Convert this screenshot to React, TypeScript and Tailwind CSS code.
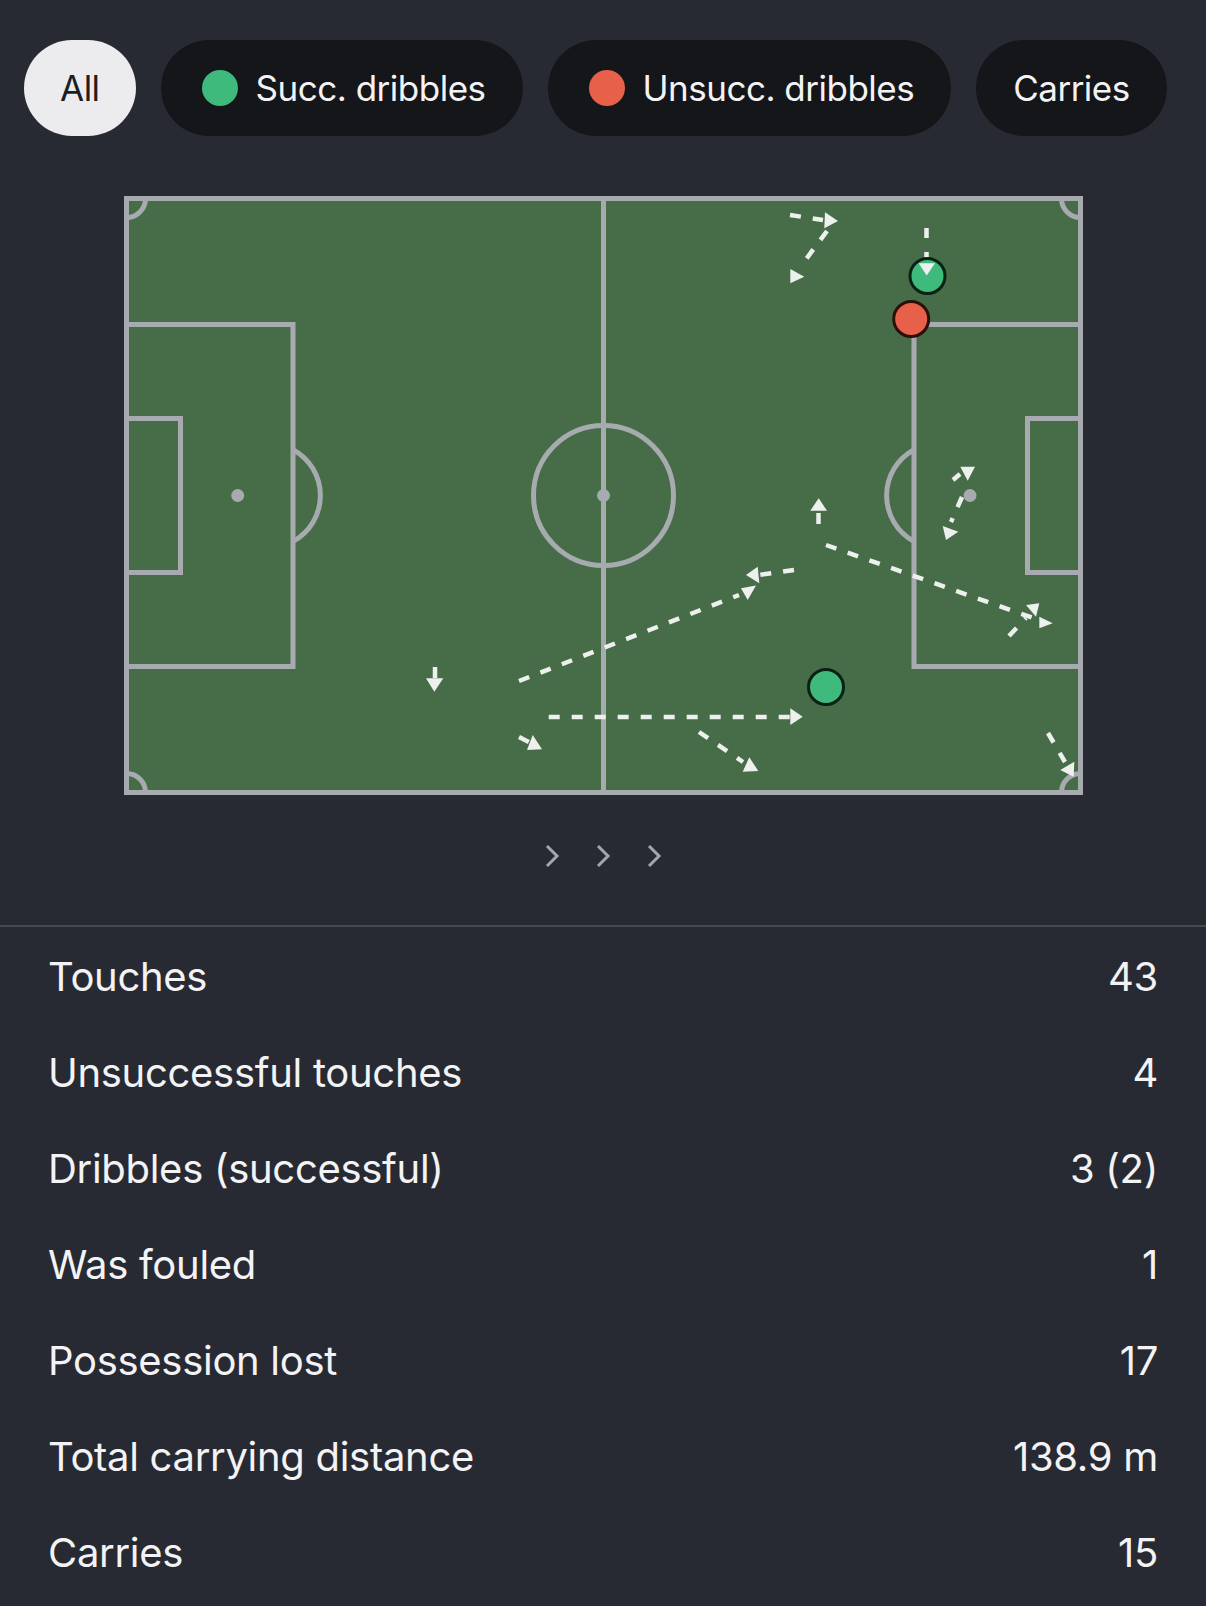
import React from "react";

type Carry = { x1: number; y1: number; x2: number; y2: number; head: string };

const filters = [
  { label: "All", active: true },
  { label: "Succ. dribbles", dot: "bg-[#3dba7c]" },
  { label: "Unsucc. dribbles", dot: "bg-[#e6604a]" },
  { label: "Carries" },
];

// carries in page pixel coords (the svg viewBox matches the page)
const carries: Carry[] = [
  { x1: 789, y1: 215, x2: 822, y2: 220, head: "824,212.3 837,221 823.3,228.3" },
  { x1: 826, y1: 231, x2: 800, y2: 266, head: "789.3,269 803.3,276.7 789.3,283.3" },
  { x1: 952, y1: 480, x2: 959, y2: 474, head: "959.3,466.7 974,466.7 966.7,480.7" },
  { x1: 961, y1: 497, x2: 950, y2: 522, head: "941.7,526 957.3,531.7 945,540" },
  { x1: 817.5, y1: 524, x2: 817.5, y2: 512, head: "809.3,510.7 826,510.7 817.7,498.3" },
  { x1: 825, y1: 545, x2: 1035, y2: 619, head: "1038.3,616.7 1051.7,623.3 1038.3,628.3" },
  { x1: 793, y1: 570, x2: 758, y2: 575, head: "745,575 756.7,566.7 758.3,583.3" },
  { x1: 518, y1: 681, x2: 738, y2: 595, head: "740,588.3 755,585.5 746.7,600" },
  { x1: 547.7, y1: 717, x2: 789, y2: 717, head: "789.3,708.3 801.7,716.7 789.3,725" },
  { x1: 434, y1: 667, x2: 434, y2: 678, head: "425,678.3 442.3,678.3 433.3,691.7" },
  { x1: 518, y1: 737, x2: 528, y2: 742, head: "531.7,735 526,750 541,749.3" },
  { x1: 698, y1: 732, x2: 742, y2: 762, head: "748.3,757.3 741.7,771.7 757.3,771" },
  { x1: 1047, y1: 733, x2: 1064, y2: 762, head: "1059.3,770 1073.3,761.7 1072.7,776.7" },
  { x1: 1008, y1: 636, x2: 1025, y2: 618, head: "1025,605 1038.3,603.3 1035,616.7" },
];

const stats = [
  ["Touches", "43"],
  ["Unsuccessful touches", "4"],
  ["Dribbles (successful)", "3 (2)"],
  ["Was fouled", "1"],
  ["Possession lost", "17"],
  ["Total carrying distance", "138.9 m"],
  ["Carries", "15"],
];

const LINE = "#a7abb0";
const DASH = "#eef0ee";

function Pitch() {
  return (
    <svg width="959" height="599" viewBox="123 196 959 599" className="block mx-auto">
      <rect x="125.5" y="198.5" width="954" height="594" fill="#466d48" stroke={LINE} strokeWidth="5" />
      <g fill="none" stroke={LINE} strokeWidth="5">
        <line x1="602.5" y1="198.5" x2="602.5" y2="792.5" />
        <circle cx="602.5" cy="495.5" r="70" />
        <path d="M125.5 324.5 H292 V666.5 H125.5" />
        <path d="M125.5 418.5 H179.5 V572.5 H125.5" />
        <path d="M292 449.7 A52 52 0 0 1 292 541.3" />
        <path d="M1079.5 324.5 H913 V666.5 H1079.5" />
        <path d="M1079.5 418.5 H1026.5 V572.5 H1079.5" />
        <path d="M913 449.7 A52 52 0 0 0 913 541.3" />
        <path d="M125.5 217.5 A19 19 0 0 0 144.5 198.5" />
        <path d="M1060.5 198.5 A19 19 0 0 0 1079.5 217.5" />
        <path d="M125.5 773.5 A19 19 0 0 1 144.5 792.5" />
        <path d="M1060.5 792.5 A19 19 0 0 1 1079.5 773.5" />
      </g>
      <g fill={LINE}>
        <circle cx="602.5" cy="495.5" r="6.5" />
        <circle cx="236.7" cy="495.5" r="6.5" />
        <circle cx="969" cy="495.5" r="6.5" />
      </g>

      {carries.map((c, i) => (
        <g key={i}>
          <line x1={c.x1} y1={c.y1} x2={c.x2} y2={c.y2} stroke={DASH} strokeWidth="4.5" strokeDasharray="11 12" />
          <polygon points={c.head} fill={DASH} />
        </g>
      ))}

      {/* carry into the top dribble */}
      <line x1="925.5" y1="228" x2="925.5" y2="258" stroke={DASH} strokeWidth="4.5" strokeDasharray="10 14" />
      <circle cx="926.5" cy="276" r="17.5" fill="#3dba7c" stroke="#0b2115" strokeWidth="3" />
      <polygon points="917.7,263.3 934,263.3 925.7,275.5" fill={DASH} />
      <circle cx="910.2" cy="319" r="17.5" fill="#e6604a" stroke="#2a0f0b" strokeWidth="3" />
      <circle cx="825" cy="687" r="17.5" fill="#3dba7c" stroke="#0b2115" strokeWidth="3" />
    </svg>
  );
}

function Chevron() {
  return (
    <svg width="16" height="26" viewBox="0 0 16 26">
      <polyline points="3,3 13,13 3,23" fill="none" stroke="#a3a6ad" strokeWidth="3" />
    </svg>
  );
}

export default function App() {
  return (
    <div className="min-h-screen w-full bg-[#272a32] font-['Inter',sans-serif] text-[#f3f3f5]">
      <div className="flex gap-[25px] pl-[24px] pt-[40px] text-[35px] tracking-[-0.5px]">
        {filters.map((f) => (
          <button
            key={f.label}
            className={
              f.active
                ? "h-[96px] rounded-full bg-[#ececee] px-[36px] text-[#1c1e22]"
                : f.dot
                ? "flex h-[96px] items-center gap-[18px] rounded-full bg-[#151619] pl-[41px] pr-[37px]"
                : "h-[96px] rounded-full bg-[#151619] px-[37px]"
            }
          >
            {f.dot && <span className={`h-9 w-9 rounded-full ${f.dot}`} />}
            {f.label}
          </button>
        ))}
      </div>

      <div className="mt-[60px]">
        <Pitch />
      </div>

      <div className="mt-[48px] flex justify-center gap-[35px]">
        <Chevron />
        <Chevron />
        <Chevron />
      </div>

      <div className="mt-[56px] h-[2px] bg-[#464950]" />

      <div className="pt-[2px]">
        {stats.map(([label, value]) => (
          <div key={label} className="flex h-[96px] items-center justify-between px-12 text-[40px] leading-none tracking-[-0.3px]">
            <span>{label}</span>
            <span>{value}</span>
          </div>
        ))}
      </div>
    </div>
  );
}
